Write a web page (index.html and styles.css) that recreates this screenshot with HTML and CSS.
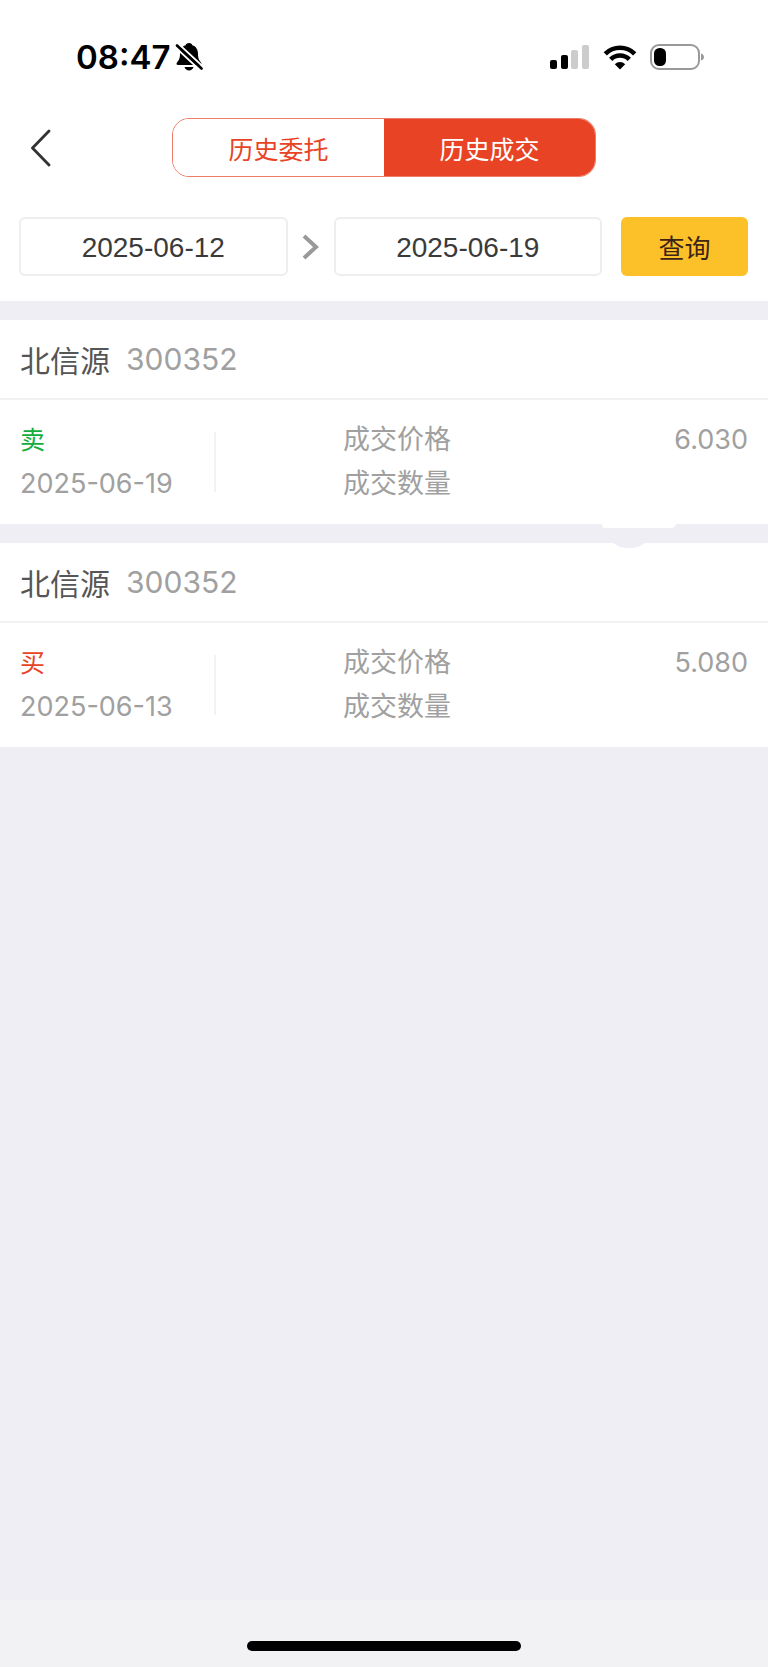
FILE: index.html
```html
<!DOCTYPE html>
<html lang="zh-CN">
<head>
<meta charset="utf-8">
<meta name="viewport" content="width=device-width, initial-scale=1">
<title>历史成交</title>
<link rel="stylesheet" href="styles.css">
</head>
<body>
<div class="app">
  <header class="top">
    <div class="status">
      <div class="status-left">
        <span class="clock">08:47</span>
        <svg class="bell" width="28" height="30" viewBox="0 0 28 30" aria-hidden="true">
          <path d="M14 1c2 0 3 1 3.300 2.200C21.500 4.500 23 8 23 12c0 5 1.500 6.500 3 8.500 1 1.500.5 2.500-1 2.500H3c-1.500 0-2-1-1-2.500 1.500-2 3-3.500 3-8.500 0-4 1.500-7.500 5.700-8.800C11 2 12 1 14 1Z"/>
          <path d="M9.500 25h9c-.7 2.300-2.300 3.500-4.500 3.500S10.200 27.300 9.500 25Z"/>
          <path d="M0 5 26 29M3 1.500 29 25.500" stroke="#fff" stroke-width="2"/>
          <path d="M2 3.500 26.500 26.500" stroke="#000" stroke-width="2.600" stroke-linecap="round"/>
        </svg>
      </div>
      <div class="status-right">
        <svg width="40" height="26" viewBox="0 0 40 26" aria-hidden="true">
          <rect y="16" width="7" height="9" rx="2"/>
          <rect x="11" y="11" width="7" height="14" rx="2"/>
          <rect x="21" y="6" width="7" height="19" rx="2" fill="#ccc"/>
          <rect x="32" y="1" width="7" height="24" rx="2" fill="#ccc"/>
        </svg>
        <svg width="34" height="26" viewBox="0 0 34 26" fill="none" stroke="#000" stroke-width="4.600" aria-hidden="true">
          <path d="M2.300 9.800a20.800 20.800 0 0 1 29.400 0"/>
          <path d="M7.700 15.300a13.200 13.200 0 0 1 18.600 0"/>
          <path d="M17 25.500l-5.200-5.300a7.500 7.500 0 0 1 10.400 0Z" fill="#000" stroke="none"/>
        </svg>
        <svg width="55" height="26" viewBox="0 0 55 26" aria-hidden="true">
          <rect x="1" y="1" width="48" height="24" rx="8" fill="none" stroke="#999" stroke-width="2"/>
          <rect x="4" y="4" width="12" height="18" rx="5.500"/>
          <path d="M51 9.500c2 .5 3 2 3 3.500s-1 3-3 3.500Z" fill="#999"/>
        </svg>
      </div>
    </div>
    <nav class="nav">
      <button class="back" type="button" aria-label="返回">
        <svg width="20" height="38" viewBox="0 0 20 38" fill="none" stroke="#333" stroke-width="2.800" stroke-linecap="round" stroke-linejoin="round"><path d="M18 2 1.500 19 18 36"/></svg>
      </button>
      <div class="tabs">
        <button class="tab" type="button">历史委托</button>
        <button class="tab tab-active" type="button">历史成交</button>
      </div>
    </nav>
    <form class="filter">
      <input class="date" type="text" value="2025-06-12" aria-label="开始日期">
      <svg class="arrow" width="18" height="28" viewBox="0 0 18 28" fill="none" stroke="#999" stroke-width="4" aria-hidden="true"><path d="M2 3 14 14 2 25"/></svg>
      <input class="date" type="text" value="2025-06-19" aria-label="结束日期">
      <button class="query" type="button">查询</button>
    </form>
  </header>
  <main class="list">
    <article class="card">
      <h2 class="card-head">北信源<span class="code">300352</span></h2>
      <div class="card-body">
        <div class="side"><span class="kind sell">卖</span><span class="day">2025-06-19</span></div>
        <dl class="facts">
          <div class="fact"><dt>成交价格</dt><dd>6.030</dd></div>
          <div class="fact"><dt>成交数量</dt><dd></dd></div>
        </dl>
      </div>
      <svg class="smudge" width="74" height="26" viewBox="0 0 74 26" aria-hidden="true">
        <path d="M0 0h74c-1 3-3 4-5 4H3C1 4 0 3 0 0Z" fill="#fff"/>
        <path d="M11 19h32c-4 3-9 5-16 5s-12-2-16-5Z" fill="#efeef4"/>
      </svg>
    </article>
    <article class="card">
      <h2 class="card-head">北信源<span class="code">300352</span></h2>
      <div class="card-body">
        <div class="side"><span class="kind buy">买</span><span class="day">2025-06-13</span></div>
        <dl class="facts">
          <div class="fact"><dt>成交价格</dt><dd>5.080</dd></div>
          <div class="fact"><dt>成交数量</dt><dd></dd></div>
        </dl>
      </div>
    </article>
  </main>
  <footer class="home"><div class="home-bar"></div></footer>
</div>
</body>
</html>
```
FILE: styles.css
```css
* { box-sizing: border-box; }
body {
  margin: 0;
  background: #efeef4;
  font-family: Inter, "Noto Sans CJK SC", sans-serif;
  color: #555;
}
button, input { font: inherit; margin: 0; padding: 0; }
.app { display: flex; flex-direction: column; min-height: 100vh; }
.top { background: #fff; padding-bottom: 25px; }

.status {
  display: flex;
  justify-content: space-between;
  align-items: center;
  padding: 36px 63px 0 76px;
  height: 78px;
}
.status-left { display: flex; align-items: center; gap: 5px; }
.clock { font-size: 33px; line-height: 40px; font-weight: 600; color: #000; }
.status-right { display: flex; align-items: center; gap: 13px; }

.nav {
  display: grid;
  grid-template-columns: 172px 1fr 172px;
  align-items: center;
  margin-top: 40px;
}
.back {
  width: 60px;
  height: 59px;
  padding-left: 31px;
  border: 0;
  background: none;
  display: flex;
  align-items: center;
}
.tabs {
  display: flex;
  height: 59px;
  border: 1px solid #ee7c68;
  border-radius: 17px;
  overflow: hidden;
}
.tab {
  flex: 1;
  border: 0;
  background: #fff;
  color: #e84325;
  font-size: 25px;
}
.tab-active { background: #e84325; color: #fff; }

.filter {
  display: flex;
  align-items: center;
  margin-top: 40px;
  padding: 0 20px 0 19px;
}
.date {
  flex: 1;
  min-width: 0;
  height: 59px;
  padding-top: 2px;
  border: 2px solid #eee;
  border-radius: 6px;
  background: #fff;
  color: #3a3a3a;
  font-family: "Liberation Sans", Arial, sans-serif;
  font-size: 28px;
  text-align: center;
}
.arrow { margin: 0 14px; }
.query {
  width: 127px;
  height: 59px;
  margin-left: 19px;
  border: 0;
  border-radius: 6px;
  background: #fcc128;
  color: #3d2416;
  font-size: 26px;
}

.list { display: flex; flex-direction: column; gap: 19px; margin-top: 19px; flex: 1; }
.card { background: #fff; position: relative; }
.card-head {
  display: flex;
  align-items: center;
  gap: 16px;
  margin: 0;
  height: 80px;
  padding: 0 20px;
  border-bottom: 2px solid #f2f2f2;
  font-size: 30px;
  font-weight: 400;
}
.code { color: #a0a0a0; }
.card-body {
  display: flex;
  align-items: center;
  padding: 18px 20px;
  font-size: 27px;
  line-height: 44px;
  color: #a0a0a0;
}
.side { display: flex; flex-direction: column; flex: 1; position: relative; }
.side::after {
  content: "";
  position: absolute;
  left: 194px;
  top: 14px;
  bottom: 14px;
  width: 2px;
  background: #f2f2f2;
}
.kind { font-size: 25px; }
.sell { color: #12ad3c; }
.buy { color: #e84325; }
.facts { margin: 0; width: 405px; max-width: 56%; }
.fact { display: flex; justify-content: space-between; }
.fact dd { margin: 0; }
.smudge { position: absolute; right: 92px; top: 100%; z-index: 1; }

.home {
  display: flex;
  justify-content: center;
  align-items: flex-start;
  height: 67px;
  padding-top: 41px;
  background: #f2f2f4;
}
.home-bar { width: 274px; height: 10px; border-radius: 5px; background: #000; }
```
